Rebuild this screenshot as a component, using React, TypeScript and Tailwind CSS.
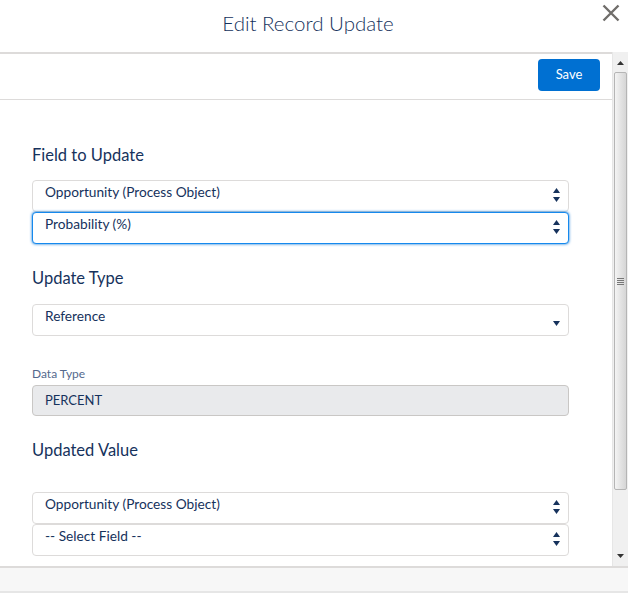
import React from "react";

const navy = "text-[#16325c]";

function Spinner({ upDown = true }: { upDown?: boolean }) {
  return (
    <div className="flex flex-col items-center gap-[4px] pt-[7px]">
      {upDown && (
        <svg width="7" height="5" viewBox="0 0 7 5">
          <path d="M3.5 0 L7 5 L0 5 Z" fill="#16325c" />
        </svg>
      )}
      <svg width="7" height="5" viewBox="0 0 7 5" className={upDown ? "" : "mt-[9px]"}>
        <path d="M0 0 L7 0 L3.5 5 Z" fill="#16325c" />
      </svg>
    </div>
  );
}

function SelectBox({
  value,
  focused,
  single,
}: {
  value: string;
  focused?: boolean;
  single?: boolean;
}) {
  return (
    <div
      className={`flex h-[32px] w-[537px] items-start justify-between rounded-[4px] border bg-white pl-[12px] pr-[8px] ${
        focused ? "border-[#1589ee] shadow-[0_0_3px_#0070d2]" : "border-[#dddbda]"
      }`}
    >
      <span className={`pt-[1px] text-[13.7px] leading-[20px] ${navy}`}>{value}</span>
      <Spinner upDown={!single} />
    </div>
  );
}

function Label({ children }: { children: React.ReactNode }) {
  return <div className={`text-[16.5px] leading-[20px] ${navy}`}>{children}</div>;
}

function Scrollbar() {
  return (
    <div className="flex w-[16px] flex-col border-l border-[#e6e6e6] bg-[#f0f0f0]">
      <div className="flex h-[20px] items-center justify-center pt-[2px]">
        <svg width="7" height="4" viewBox="0 0 7 4">
          <path d="M3.5 0 L7 4 L0 4 Z" fill="#333" />
        </svg>
      </div>
      <div className="mx-[1px] flex h-[418px] items-center justify-center rounded-[2px] border border-[#b5b5b5] bg-gradient-to-r from-[#f4f4f4] via-[#e4e4e4] to-[#d6d6d6]">
        <div className="flex flex-col gap-[1px]">
          <div className="h-[1px] w-[7px] bg-[#777]" />
          <div className="h-[1px] w-[7px] bg-[#777]" />
          <div className="h-[1px] w-[7px] bg-[#777]" />
          <div className="h-[1px] w-[7px] bg-[#777]" />
        </div>
      </div>
      <div className="flex-1" />
      <div className="flex h-[16px] items-center justify-center pb-[4px]">
        <svg width="7" height="4" viewBox="0 0 7 4">
          <path d="M0 0 L7 0 L3.5 4 Z" fill="#333" />
        </svg>
      </div>
    </div>
  );
}

export default function App() {
  return (
    <div
      className="relative flex h-[595px] w-[630px] flex-col overflow-hidden bg-white"
      style={{ fontFamily: "Lato, 'Open Sans', sans-serif" }}
    >
      <header className="flex h-[52px] items-center justify-center pb-[6px]">
        <h1 className={`mr-[14px] text-[20.5px] font-light leading-none ${navy}`}>Edit Record Update</h1>
        <button className="absolute right-[9px] top-[3px] p-[1px]" aria-label="Close">
          <svg width="18" height="18" viewBox="0 0 18 18">
            <path d="M1.5 1.5 L16.5 16.5 M16.5 1.5 L1.5 16.5" stroke="#706e6b" strokeWidth="2.4" />
          </svg>
        </button>
      </header>

      <div className="flex h-[514px]">
        <div className="flex w-[612px] flex-col border-t-2 border-[#dddbda]">
          <div className="flex h-[46px] items-start justify-end border-b border-[#dddbda] pr-[12px] pt-[5px]">
            <button className="h-[32px] w-[62px] rounded-[4px] bg-[#0070d2] text-[13px] text-white">
              Save
            </button>
          </div>

          <div className="flex flex-col pl-[32px]">
            <div className="mt-[45px]">
              <Label>Field to Update</Label>
            </div>
            <div className="mt-[15px] flex flex-col">
              <SelectBox value="Opportunity (Process Object)" />
              <SelectBox value="Probability (%)" focused />
            </div>

            <div className="mt-[24px]">
              <Label>Update Type</Label>
            </div>
            <div className="mt-[16px]">
              <SelectBox value="Reference" single />
            </div>

            <div className="mt-[30px] text-[12px] leading-[16px] text-[#54698d]">Data Type</div>
            <div
              className={`mt-[3px] flex h-[31px] w-[537px] items-center rounded-[4px] border border-[#c9c7c5] bg-[#e9eaec] pl-[12px] text-[13px] ${navy}`}
            >
              PERCENT
            </div>

            <div className="mt-[24px]">
              <Label>Updated Value</Label>
            </div>
            <div className="mt-[32px] flex flex-col">
              <SelectBox value="Opportunity (Process Object)" />
              <SelectBox value="-- Select Field --" />
            </div>
          </div>
        </div>
        <Scrollbar />
      </div>

      <footer className="mr-[2px] h-[27px] border-y-2 border-t-[#dddbda] border-b-[#e6e6e6] bg-[#f7f7f7]" />
    </div>
  );
}
